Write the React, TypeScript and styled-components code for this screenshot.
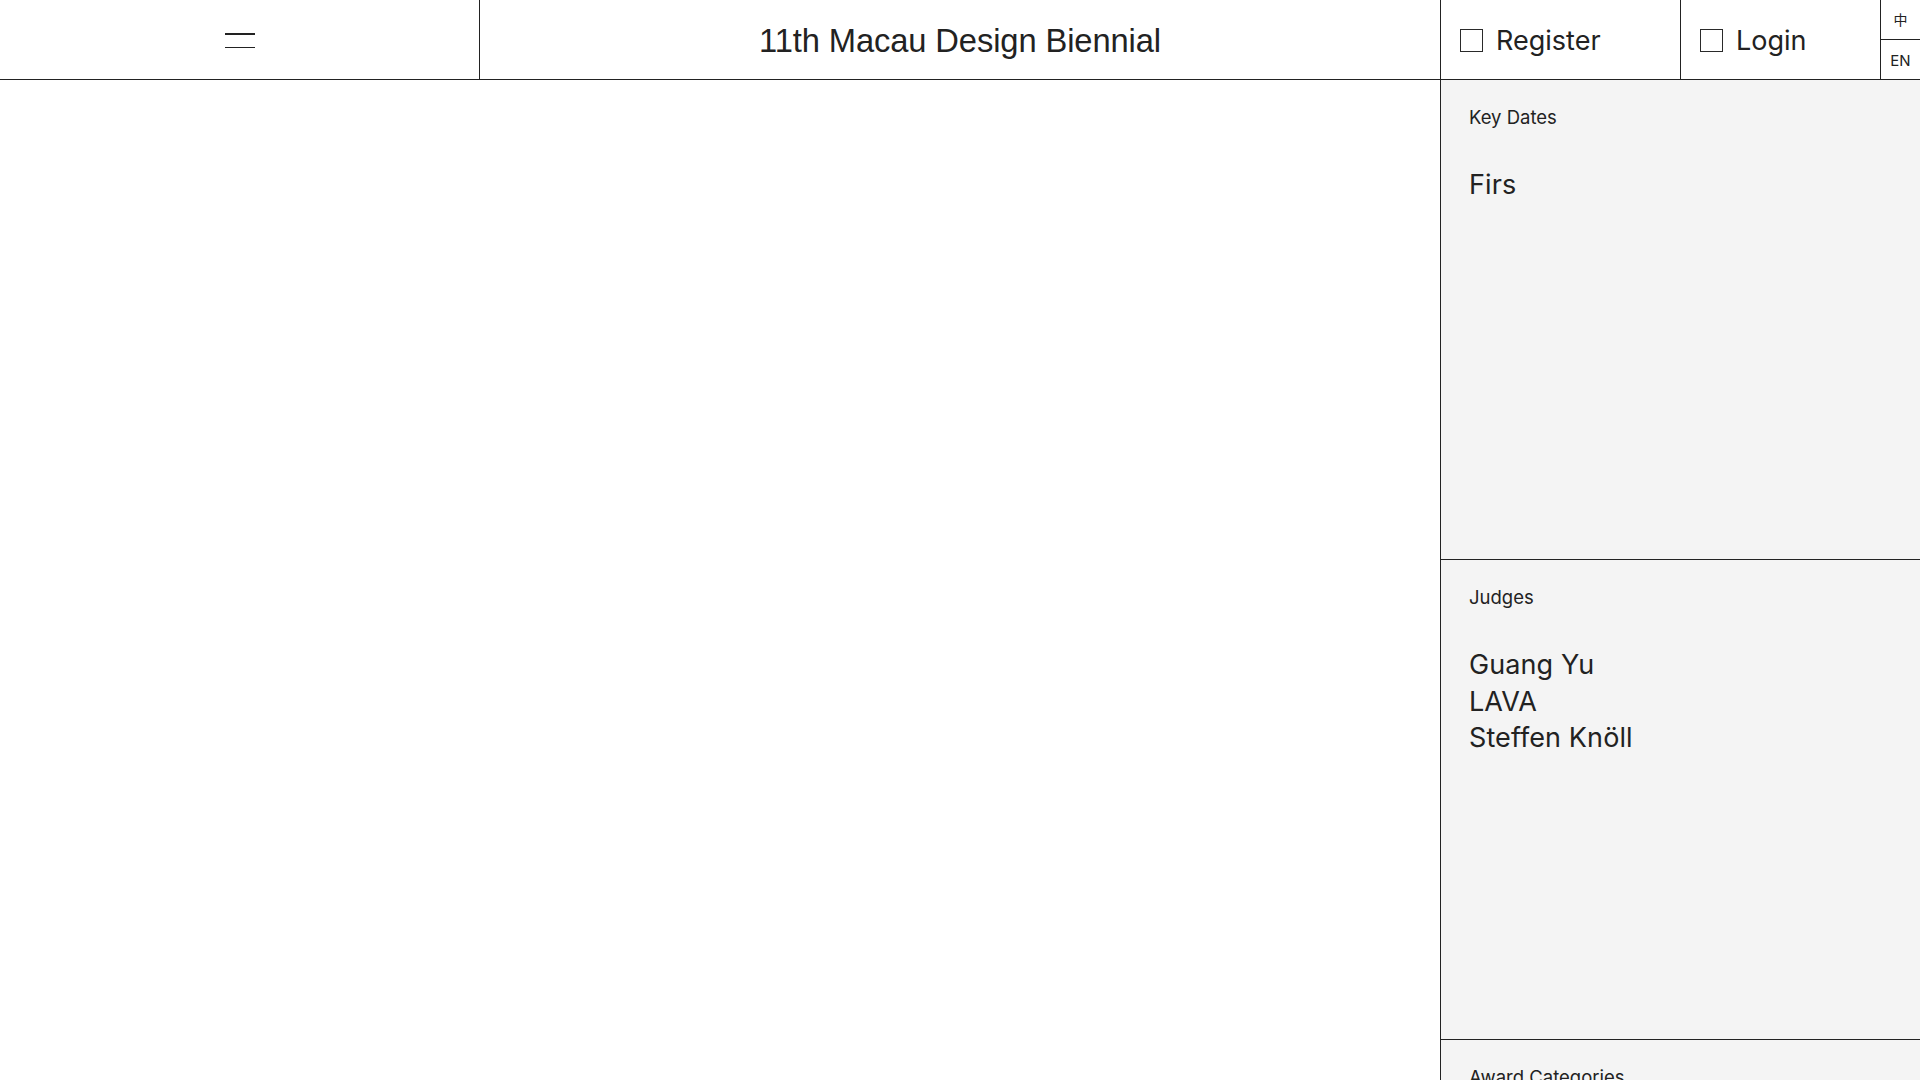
import React from "react";
import styled, { createGlobalStyle } from "styled-components";

const GlobalStyle = createGlobalStyle`
  html, body {
    margin: 0;
    padding: 0;
    background: #ffffff;
    color: #222222;
    font-family: Inter, "Noto Sans", "Noto Sans CJK SC", sans-serif;
  }
  * { box-sizing: border-box; }
`;

const Page = styled.div`
  height: 100vh;
  display: grid;
  grid-template-rows: 80px 1fr;
  overflow: hidden;
`;

const Header = styled.header`
  display: grid;
  grid-template-columns: 480px 1fr 240px 200px 40px;
  border-bottom: 1px solid #222;
`;

const MenuCell = styled.div`
  display: flex;
  align-items: center;
  justify-content: center;
  padding-top: 2px;
  border-right: 1px solid #222;
`;

const MenuButton = styled.button`
  display: flex;
  flex-direction: column;
  gap: 12px;
  width: 30px;
  padding: 0;
  border: 0;
  background: none;
  cursor: pointer;
`;

const Bar = styled.span`
  display: block;
  height: 1.5px;
  width: 100%;
  background: #222;
`;

const TitleCell = styled.div`
  display: flex;
  align-items: center;
  justify-content: center;
  padding-top: 2px;
`;

const Title = styled.h1`
  margin: 0;
  font-family: "Liberation Sans", Arial, sans-serif;
  font-weight: 400;
  font-size: 32.7px;
  letter-spacing: -0.1px;
  color: #222;
`;

const AuthCell = styled.a`
  display: flex;
  align-items: center;
  gap: 13px;
  padding-left: 19px;
  padding-top: 2px;
  border-left: 1px solid #222;
  color: #222;
  text-decoration: none;
  font-size: 27px;
  cursor: pointer;
`;

const Box = styled.span`
  width: 23px;
  height: 23px;
  border: 1.5px solid #2a2a2a;
  flex: none;
`;

const LangCell = styled.div`
  display: grid;
  grid-template-rows: 1fr 1fr;
  border-left: 1px solid #222;
`;

const LangOption = styled.a<{ $divided?: boolean }>`
  display: flex;
  align-items: center;
  justify-content: center;
  font-size: ${(p) => (p.$divided ? "14px" : "15px")};
  padding-top: ${(p) => (p.$divided ? "0" : "3px")};
  color: #222;
  text-decoration: none;
  border-bottom: ${(p) => (p.$divided ? "1px solid #222" : "none")};
`;

const Body = styled.div`
  display: grid;
  grid-template-columns: 1fr 480px;
  min-height: 0;
`;

const Main = styled.main`
  background: #fff;
`;

const Aside = styled.aside`
  background: #f4f4f4;
  border-left: 1px solid #222;
  overflow-y: auto;
  scrollbar-width: none;
  &::-webkit-scrollbar { display: none; }
`;

const Section = styled.section`
  height: 480px;
  flex: none;
  padding: 25px 28px;
  border-bottom: 1px solid #222;
`;

const Label = styled.h2`
  margin: 0;
  font-size: 18.5px;
  font-weight: 400;
  line-height: 24px;
  color: #222;
`;

const Items = styled.ul`
  list-style: none;
  margin: 38px 0 0;
  padding: 0;
`;

const Item = styled.li`
  font-size: 27px;
  line-height: 36.7px;
  letter-spacing: 0.1px;
  color: #222;
`;

const sections = [
  { label: "Key Dates", items: ["Firs"] },
  { label: "Judges", items: ["Guang Yu", "LAVA", "Steffen Knöll"] },
  { label: "Award Categories", items: [] as string[] },
];

export default function App() {
  return (
    <>
      <GlobalStyle />
      <Page>
        <Header>
          <MenuCell>
            <MenuButton aria-label="Menu">
              <Bar />
              <Bar />
            </MenuButton>
          </MenuCell>
          <TitleCell>
            <Title>11th Macau Design Biennial</Title>
          </TitleCell>
          <AuthCell>
            <Box />
            Register
          </AuthCell>
          <AuthCell>
            <Box />
            Login
          </AuthCell>
          <LangCell>
            <LangOption $divided>中</LangOption>
            <LangOption>EN</LangOption>
          </LangCell>
        </Header>
        <Body>
          <Main />
          <Aside>
            {sections.map((s) => (
              <Section key={s.label}>
                <Label>{s.label}</Label>
                <Items>
                  {s.items.map((it) => (
                    <Item key={it}>{it}</Item>
                  ))}
                </Items>
              </Section>
            ))}
          </Aside>
        </Body>
      </Page>
    </>
  );
}
